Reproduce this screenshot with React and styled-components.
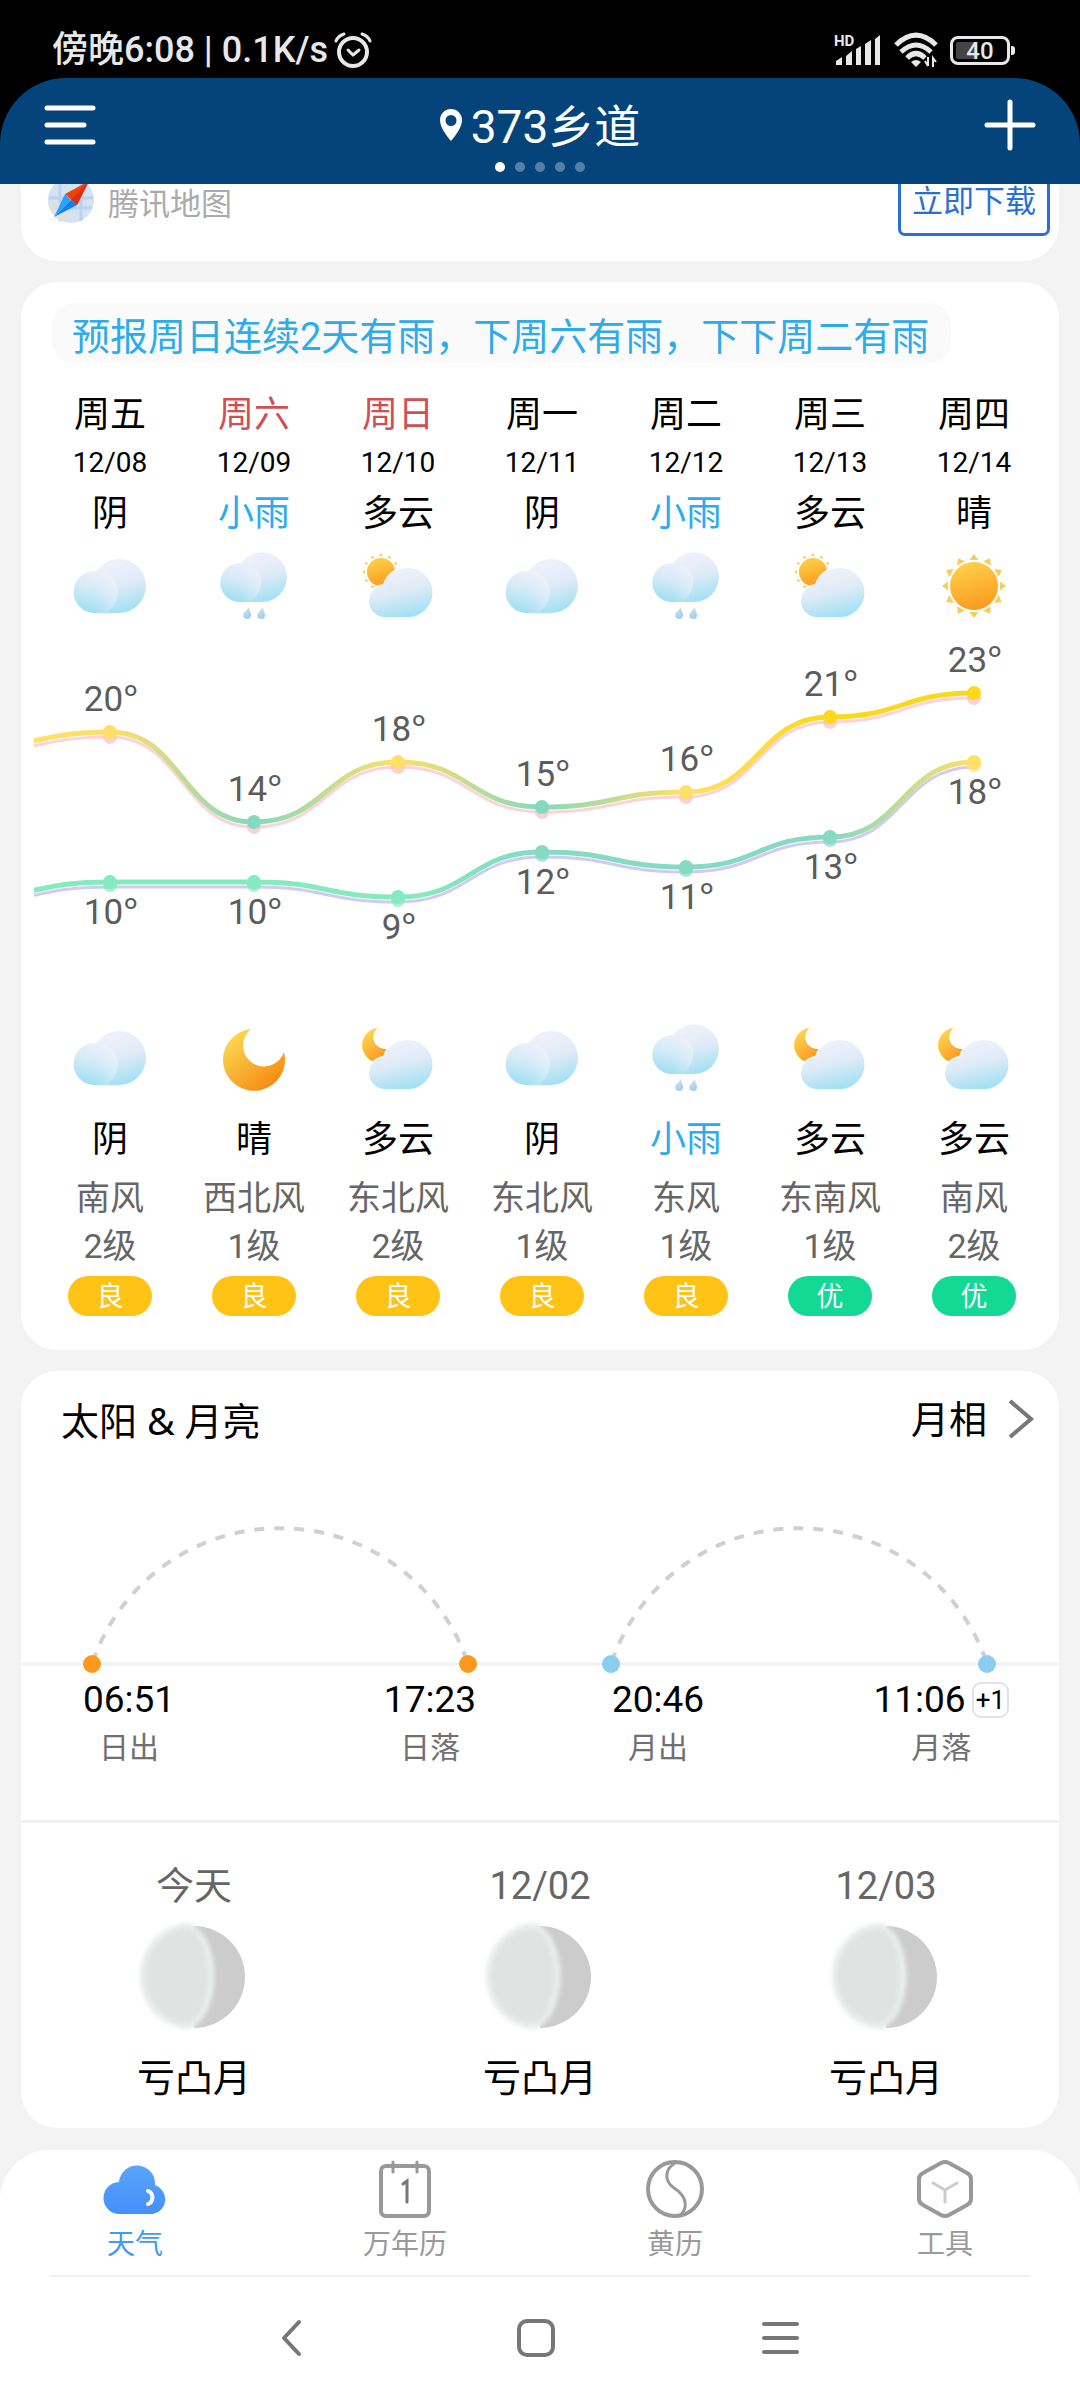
import styled, { createGlobalStyle } from "styled-components";

const DIAS = [
	{ dia: "周五", fecha: "12/08", tiempo: "阴", icono: "nube", noche: "阴", iconoNoche: "nube", viento: "南风", nivel: "2级", aire: "良" },
	{ dia: "周六", fecha: "12/09", tiempo: "小雨", icono: "lluvia", noche: "晴", iconoNoche: "luna", viento: "西北风", nivel: "1级", aire: "良", festivo: true },
	{ dia: "周日", fecha: "12/10", tiempo: "多云", icono: "solNube", noche: "多云", iconoNoche: "lunaNube", viento: "东北风", nivel: "2级", aire: "良", festivo: true },
	{ dia: "周一", fecha: "12/11", tiempo: "阴", icono: "nube", noche: "阴", iconoNoche: "nube", viento: "东北风", nivel: "1级", aire: "良" },
	{ dia: "周二", fecha: "12/12", tiempo: "小雨", icono: "lluvia", noche: "小雨", iconoNoche: "lluvia", viento: "东风", nivel: "1级", aire: "良" },
	{ dia: "周三", fecha: "12/13", tiempo: "多云", icono: "solNube", noche: "多云", iconoNoche: "lunaNube", viento: "东南风", nivel: "1级", aire: "优" },
	{ dia: "周四", fecha: "12/14", tiempo: "晴", icono: "sol", noche: "多云", iconoNoche: "lunaNube", viento: "南风", nivel: "2级", aire: "优" },
];

// the first point of each series is the day before, half hidden at the left edge
const MAXIMAS = [
	{ y: 126, color: "#ffe066" },
	{ t: 20, y: 110, color: "#ffdf66" },
	{ t: 14, y: 200, color: "#84dabf" },
	{ t: 18, y: 140, color: "#ffe066" },
	{ t: 15, y: 185, color: "#84dabf" },
	{ t: 16, y: 170, color: "#ffe066" },
	{ t: 21, y: 95, color: "#fbd81c" },
	{ t: 23, y: 71, color: "#fbd81c" },
];

const MINIMAS = [
	{ y: 275, color: "#85ebbf" },
	{ t: 10, y: 260, color: "#85ebbf" },
	{ t: 10, y: 260, color: "#85ebbf" },
	{ t: 9, y: 275, color: "#85ebbf" },
	{ t: 12, y: 230, color: "#86dac2" },
	{ t: 11, y: 245, color: "#86dac2" },
	{ t: 13, y: 215, color: "#86dac2" },
	{ t: 18, y: 140, color: "#ffe066" },
];

const FASES = ["今天", "12/02", "12/03"];

const posX = (i) => 76 + (i - 1) * 144;

const trazar = (serie) =>
	serie
		.map(({ y }, i) => {
			if (i === 0) return `M${posX(0)} ${y}`;
			const medio = posX(i) - 72;
			return `C${medio} ${serie[i - 1].y} ${medio} ${y} ${posX(i)} ${y}`;
		})
		.join("");

const Degradados = () => (
	<Ocultos aria-hidden="true">
		<defs>
			<linearGradient id="nubeFondo" x1="0.3" y1="0" x2="0.6" y2="1">
				<stop offset="0" stopColor="#f3f1fb" />
				<stop offset="0.5" stopColor="#dfebf7" />
				<stop offset="1" stopColor="#9fe0f3" />
			</linearGradient>
			<linearGradient id="nubeFrente" x1="0.6" y1="0" x2="0.35" y2="1">
				<stop offset="0" stopColor="#edf0fa" />
				<stop offset="0.45" stopColor="#d3ebf7" />
				<stop offset="1" stopColor="#9ddff2" />
			</linearGradient>
			<linearGradient id="nubeBrillo" x1="0" y1="0" x2="1" y2="0">
				<stop offset="0.5" stopColor="#f4f2fc" stopOpacity="0" />
				<stop offset="1" stopColor="#f4f2fc" stopOpacity="0.4" />
			</linearGradient>
			<linearGradient id="solFondo" x1="0.3" y1="0" x2="0.6" y2="1">
				<stop offset="0" stopColor="#ffd14a" />
				<stop offset="1" stopColor="#fa9a1e" />
			</linearGradient>
			<linearGradient id="lunaFondo" x1="0.1" y1="0.1" x2="0.8" y2="0.9">
				<stop offset="0" stopColor="#fdd952" />
				<stop offset="1" stopColor="#f68d15" />
			</linearGradient>
			<linearGradient id="gota" x1="0" y1="0" x2="0.6" y2="1">
				<stop offset="0" stopColor="#e4eaf6" />
				<stop offset="1" stopColor="#9dcdec" />
			</linearGradient>
			<linearGradient id="nubeAzul" x1="0" y1="0" x2="0" y2="1">
				<stop offset="0" stopColor="#58a5fb" />
				<stop offset="1" stopColor="#458ffb" />
			</linearGradient>
			<filter id="halo" x="-20%" y="-20%" width="140%" height="140%">
				<feGaussianBlur stdDeviation="2" />
			</filter>
		</defs>
	</Ocultos>
);

const Rayos = ({ cx, cy, r, largo, ancho }) =>
	Array.from({ length: 12 }, (_, i) => (
		<path
			key={i}
			d={`M${cx - ancho / 2} ${cy - r}L${cx} ${cy - r - largo}L${cx + ancho / 2} ${cy - r}Z`}
			transform={`rotate(${i * 30} ${cx} ${cy})`}
			fill="#f6cc5c"
		/>
	));

const FormaNube = () => (
	<>
		<path d="M49 9A27 27 0 0 1 49 63H24V36H22A27 27 0 0 1 49 9Z" fill="url(#nubeFondo)" />
		<path d="M25 21A21 21 0 0 0 24 63H34C43 60 48 50 48 40C47 28 37 21 25 21Z" fill="url(#nubeFrente)" />
		<path d="M25 21A21 21 0 0 0 24 63H34C43 60 48 50 48 40C47 28 37 21 25 21Z" fill="url(#nubeBrillo)" />
	</>
);

const NubeSimple = () => (
	<path
		d="M28 67A16 16 0 0 1 26 35C29 24 38 18 50 18A24 24 0 0 1 50 67Z"
		fill="url(#nubeFondo)"
		stroke="#fff"
		strokeWidth="2"
		paintOrder="stroke"
	/>
);

const Creciente = (props) => (
	<path d="M37 7A31 31 0 1 0 70 30A21 21 0 1 1 37 7Z" fill="url(#lunaFondo)" {...props} />
);

const ICONOS = {
	nube: <FormaNube />,
	lluvia: (
		<>
			<g transform="translate(3 -6) scale(.92)">
				<FormaNube />
			</g>
			<path d="M35 56C35 61 37 62 37 65A4 4 0 0 1 29 65C29 62 34 60 35 56Z" fill="url(#gota)" />
			<path d="M49 56C49 61 51 62 51 65A4 4 0 0 1 43 65C43 62 48 60 49 56Z" fill="url(#gota)" />
		</>
	),
	solNube: (
		<>
			<Rayos cx={23} cy={22} r={16} largo={3} ancho={4} />
			<circle cx="23" cy="22" r="14" fill="url(#solFondo)" />
			<NubeSimple />
		</>
	),
	sol: (
		<>
			<Rayos cx={40} cy={36} r={26} largo={6} ancho={9} />
			<circle cx="40" cy="36" r="24" fill="url(#solFondo)" />
		</>
	),
	luna: <Creciente />,
	lunaNube: (
		<>
			<Creciente transform="translate(-1 2) scale(.56)" />
			<NubeSimple />
		</>
	),
};

const IconoTiempo = ({ tipo }) => (
	<Icono viewBox="0 0 80 72" aria-hidden="true">
		{ICONOS[tipo]}
	</Icono>
);

const Linea = ({ id, serie, sombra, sombraPunto, desfase }) => {
	const d = trazar(serie);
	const ultimo = serie.length - 1;
	return (
		<>
			<linearGradient id={id} gradientUnits="userSpaceOnUse" x1={posX(0)} x2={posX(ultimo)} y1="0" y2="0">
				{serie.map(({ color }, i) => (
					<stop key={i} offset={i / ultimo} stopColor={color} />
				))}
			</linearGradient>
			<path d={d} transform="translate(0 5)" fill="none" stroke={sombra} strokeWidth="3" />
			{serie.slice(1).map(({ y, color }, i) => (
				<circle key={i} cx={posX(i + 1)} cy={y + (sombraPunto ? 5 : 3)} r="7" fill={sombraPunto || color} opacity="0.7" />
			))}
			<path d={d} fill="none" stroke={`url(#${id})`} strokeWidth="5" />
			{serie.slice(1).map(({ t, y, color }, i) => (
				<g key={i}>
					<circle cx={posX(i + 1)} cy={y} r="7" fill={color} />
					<Grados x={posX(i + 1) + 1} y={y + desfase}>
						{t}
						<tspan>°</tspan>
					</Grados>
				</g>
			))}
		</>
	);
};

const Arco = ({ color }) => (
	<Trayecto viewBox="0 0 519 192" aria-hidden="true">
		<path d="M0 180H519" stroke="#f1f1f1" strokeWidth="3" />
		<path
			d="M71 180A198 198 0 0 1 447 180"
			fill="none"
			stroke="#d0d0d0"
			strokeWidth="4"
			strokeDasharray="10 10"
			strokeDashoffset="-2"
		/>
		<circle cx="71" cy="180" r="9" fill={color} />
		<circle cx="447" cy="180" r="9" fill={color} />
	</Trayecto>
);

const Astro = ({ color, salida, puesta, nombre, extra, $relleno }) => (
	<div>
		<Arco color={color} />
		<Horas $relleno={$relleno}>
			<Hora>
				<time>{salida}</time>
				<span>{nombre}出</span>
			</Hora>
			<Hora>
				<div>
					<time>{puesta}</time>
					{extra && <Extra>{extra}</Extra>}
				</div>
				<span>{nombre}落</span>
			</Hora>
		</Horas>
	</div>
);

const App = () => {
	return (
		<Pantalla lang="zh-CN">
			<Global />
			<Degradados />
			<Superior>
				<Estado>
					<span>傍晚6:08 | 0.1K/s</span>
					<svg width="38" height="36" viewBox="0 0 38 36" fill="none" stroke="#e8e8e8" strokeLinecap="round">
						<circle cx="19" cy="20" r="14" strokeWidth="4" />
						<path d="M14 18l5 5 6-5" strokeWidth="3" strokeLinejoin="round" />
						<path d="M2 9Q4 4 10 2M36 9Q34 4 28 2" strokeWidth="3" />
					</svg>
					<Indicadores>
						<svg width="48" height="34" viewBox="0 0 48 34" fill="#e8e8e8">
							<TextoHd x="0" y="13">HD</TextoHd>
							<path d="M2 32V28L8 24V32ZM12 32V23L18 18V32ZM22 32V16L27 13V32ZM31 32V11L37 7V32ZM41 32V6L46 2V32Z" />
						</svg>
						<svg width="44" height="36" viewBox="0 0 44 36" fill="none" stroke="#e8e8e8" strokeWidth="5">
							<path d="M2 13Q22 -7 42 13" />
							<path d="M7 20Q22 6 37 20" />
							<path d="M13 26Q22 17 31 26" />
							<path d="M17 30Q22 26 27 30L22 35Z" fill="#e8e8e8" stroke="none" />
							<path d="M34 25V34M31 29L34 34M39 35V26L42 30" strokeWidth="2" />
						</svg>
						<Bateria>40</Bateria>
					</Indicadores>
				</Estado>
				<Cabecera>
					<BarraTitulo>
						<BotonIcono type="button" aria-label="菜单">
							<svg width="52" height="52" viewBox="0 0 52 52" stroke="#fff" strokeWidth="5" strokeLinecap="round">
								<path d="M3 9H49M3 26H40M3 43H49" />
							</svg>
						</BotonIcono>
						<Titulo>
							<svg width="22" height="32" viewBox="0 0 22 32" fill="#fff">
								<path
									fillRule="evenodd"
									d="M11 0A11 11 0 0 0 0 11C0 18 6 26 11 32C16 26 22 18 22 11A11 11 0 0 0 11 0ZM11 6A5 5 0 1 1 11 17A5 5 0 1 1 11 6Z"
								/>
							</svg>
							<span>373乡道</span>
						</Titulo>
						<BotonIcono type="button" aria-label="添加">
							<svg width="52" height="52" viewBox="0 0 52 52" stroke="#fff" strokeWidth="5" strokeLinecap="round">
								<path d="M3 26H49M26 3V49" />
							</svg>
						</BotonIcono>
					</BarraTitulo>
					<Puntos>
						<Punto $activo />
						<Punto />
						<Punto />
						<Punto />
						<Punto />
					</Puntos>
				</Cabecera>
			</Superior>

			<Contenido>
				<Anuncio>
					<svg width="48" height="48" viewBox="0 0 48 48" aria-hidden="true">
						<circle cx="24" cy="22" r="23" fill="#d3e3f3" />
						<path d="M2 20H46M3 30H45M13 2V43M34 2V43" stroke="#b9d2ee" strokeWidth="3" />
						<path d="M1 25H20V45Q4 40 1 25Z" fill="#dfe0e4" />
						<path d="M42 3L18 16L30 27Z" fill="#f2410d" />
						<path d="M42 3L24 22L30 27Z" fill="#d93010" />
						<path d="M18 16L7 39L24 22Z" fill="#27a4ff" />
						<path d="M7 39L30 27L24 22Z" fill="#0b82f0" />
					</svg>
					<Anunciante>腾讯地图</Anunciante>
					<Descargar type="button">立即下载</Descargar>
				</Anuncio>

				<Prevision>
					<Aviso>预报周日连续2天有雨，下周六有雨，下下周二有雨</Aviso>
					<Semana>
						{DIAS.map((d) => (
							<Dia key={d.fecha}>
								<Texto $color={d.festivo && "#cf4f55"}>{d.dia}</Texto>
								<Fecha>{d.fecha}</Fecha>
								<Texto $color={d.tiempo === "小雨" && "#2eabea"}>{d.tiempo}</Texto>
								<IconoTiempo tipo={d.icono} />
							</Dia>
						))}
					</Semana>
					<Grafica viewBox="0 0 1012 400" role="img" aria-label="气温">
						<Linea id="lineaMax" serie={MAXIMAS} sombra="#fbd3d9" sombraPunto="#f9bfc0" desfase={-21} />
						<Linea id="lineaMin" serie={MINIMAS} sombra="#cfccf4" desfase={42} />
					</Grafica>
					<Semana>
						{DIAS.map((d) => (
							<Dia key={d.fecha}>
								<IconoTiempo tipo={d.iconoNoche} />
								<Texto $color={d.noche === "小雨" && "#2eabea"}>{d.noche}</Texto>
								<Viento>
									{d.viento}
									<br />
									{d.nivel}
								</Viento>
								<Aire $bueno={d.aire === "优"}>{d.aire}</Aire>
							</Dia>
						))}
					</Semana>
				</Prevision>

				<SolLuna>
					<Encabezado>
						<h2>太阳 & 月亮</h2>
						<a href="#fases">
							月相
							<svg width="28" height="42" viewBox="0 0 28 42" fill="none" stroke="#777" strokeWidth="4">
								<path d="M3 2L24 20L3 38" />
							</svg>
						</a>
					</Encabezado>
					<Astros>
						<Astro color="#ff9a1f" salida="06:51" puesta="17:23" nombre="日" $relleno="0 64px 0 62px" />
						<Astro color="#8bccf3" salida="20:46" puesta="11:06" nombre="月" extra="+1" $relleno="0 50px 0 72px" />
					</Astros>
					<Fases id="fases">
						{FASES.map((f) => (
							<Fase key={f}>
								<span>{f}</span>
								<svg width="116" height="112" viewBox="0 0 116 112" aria-hidden="true">
									<path d="M58 6A51 51 0 0 1 58 108Z" fill="#ccc" />
									<path d="M54 3A50 53 0 0 0 54 109C87 93 87 19 54 3Z" fill="#e9edec" filter="url(#halo)" />
									<path d="M54 9A45 47 0 0 0 54 103C78 86 78 24 54 9Z" fill="#dfe4e3" filter="url(#halo)" />
								</svg>
								<strong>亏凸月</strong>
							</Fase>
						))}
					</Fases>
				</SolLuna>
			</Contenido>

			<Inferior>
				<Pestanas>
					<Pestana href="#tianqi" $activa>
						<svg viewBox="0 0 64 60">
							<path
								d="M17 55A16 16 0 0 1 16 23A18 18 0 0 1 52 26A15 15 0 0 1 50 55Z"
								fill="url(#nubeAzul)"
							/>
							<path d="M45 32A7 7 0 0 1 45 45" stroke="#fff" strokeWidth="4" strokeLinecap="round" fill="none" />
						</svg>
						天气
					</Pestana>
					<Pestana href="#wannianli">
						<svg viewBox="0 0 64 60" fill="none" stroke="#999" strokeWidth="4" strokeLinecap="round">
							<rect x="8" y="7" width="48" height="50" rx="5" />
							<path d="M20 3V13M44 3V13" strokeWidth="3" />
							<path d="M30 25L34 22V43" strokeWidth="3" stroke="#777" />
						</svg>
						万年历
					</Pestana>
					<Pestana href="#huangli">
						<svg viewBox="0 0 64 60" fill="none" stroke="#999" strokeWidth="3">
							<circle cx="32" cy="30" r="27" strokeWidth="4" />
							<path d="M34 3C22 9 20 21 31 29C44 37 46 50 36 57" />
						</svg>
						黄历
					</Pestana>
					<Pestana href="#gongju">
						<svg viewBox="0 0 64 60" fill="none" stroke="#999" strokeLinejoin="round" strokeLinecap="round">
							<path d="M28 4Q32 2 36 4L54 14Q58 16 58 20V40Q58 44 54 46L36 56Q32 58 28 56L10 46Q6 44 6 40V20Q6 16 10 14Z" strokeWidth="4" />
							<path d="M20 24L32 31L44 24M32 31V43" stroke="#ccc" strokeWidth="3" />
						</svg>
						工具
					</Pestana>
				</Pestanas>
				<Navegacion>
					<button type="button" aria-label="返回">
						<svg width="40" height="40" viewBox="0 0 40 40">
							<path d="M27 4L12 20L27 36" />
						</svg>
					</button>
					<button type="button" aria-label="主页">
						<svg width="40" height="40" viewBox="0 0 40 40">
							<rect x="3" y="3" width="34" height="34" rx="8" />
						</svg>
					</button>
					<button type="button" aria-label="最近">
						<svg width="40" height="40" viewBox="0 0 40 40">
							<path d="M4 6H37M4 20H37M4 34H37" />
						</svg>
					</button>
				</Navegacion>
			</Inferior>
		</Pantalla>
	);
};

const Global = createGlobalStyle`
	* {
		box-sizing: border-box;
	}

	body {
		margin: 0;
		background: #f3f3f3;
		font-family: Roboto, "Noto Sans CJK SC", sans-serif;
		font-size: 36px;
		line-height: 48px;
		color: #000;
	}

	svg {
		display: block;
	}

	button {
		padding: 0;
		border: 0;
		background: none;
		font: inherit;
		cursor: pointer;
	}

	a {
		color: inherit;
		text-decoration: none;
	}
`;

const Ocultos = styled.svg`
	position: absolute;
	width: 0;
	height: 0;
`;

const Pantalla = styled.div`
	display: flex;
	flex-direction: column;
	min-height: 100vh;
`;

const Superior = styled.header`
	position: relative;
	z-index: 1;
	background: #000;
`;

const Estado = styled.div`
	display: flex;
	align-items: center;
	gap: 6px;
	height: 78px;
	padding: 22px 70px 0 52px;
	font-weight: 500;
	color: #e8e8e8;
`;

const Indicadores = styled.div`
	display: flex;
	align-items: center;
	gap: 12px;
	margin-left: auto;
`;

const TextoHd = styled.text`
	font-size: 15px;
	font-weight: 700;
`;

const Bateria = styled.span`
	position: relative;
	width: 60px;
	height: 29px;
	border: 3px solid #e8e8e8;
	border-radius: 8px;
	background: linear-gradient(90deg, #444 40%, transparent 40%) content-box;
	padding: 3px;
	font-size: 24px;
	line-height: 18px;
	text-align: center;

	&::after {
		content: "";
		position: absolute;
		top: 7px;
		right: -8px;
		width: 4px;
		height: 9px;
		border-radius: 0 3px 3px 0;
		background: #e8e8e8;
	}
`;

const Cabecera = styled.div`
	padding: 14px 44px 12px;
	border-radius: 66px 66px 0 0;
	background: #05447a;
	color: #fff;
`;

const BarraTitulo = styled.div`
	display: flex;
	align-items: center;
	justify-content: space-between;
	height: 66px;
`;

const BotonIcono = styled.button`
	width: 52px;
	height: 52px;
`;

const Titulo = styled.h1`
	display: flex;
	align-items: center;
	gap: 9px;
	margin: 0;
	font-size: 46px;
	font-weight: 400;

	span {
		padding-top: 4px;
	}
`;

const Puntos = styled.div`
	display: flex;
	justify-content: center;
	gap: 10px;
	margin-top: 4px;
`;

const Punto = styled.span`
	width: 10px;
	height: 10px;
	border-radius: 50%;
	background: ${({ $activo }) => ($activo ? "#fff" : "#5580a6")};
`;

const Contenido = styled.main`
	display: flex;
	flex-direction: column;
	gap: 21px;
	margin: -16px 21px 22px;
`;

const Tarjeta = styled.section`
	border-radius: 36px;
	background: #fff;
`;

const Anuncio = styled(Tarjeta)`
	display: flex;
	align-items: center;
	gap: 13px;
	padding: 0 9px 25px 26px;
	border-radius: 0 0 36px 36px;
	font-size: 31px;
	color: #aaa;
`;

const Anunciante = styled.span`
	padding-top: 6px;
`;

const Descargar = styled.button`
	width: 152px;
	height: 68px;
	margin-left: auto;
	border: 3px solid #2a6fd3;
	border-radius: 7px;
	color: #2a6fd3;
`;

const Prevision = styled(Tarjeta)`
	padding: 21px 13px 34px;
`;

const Aviso = styled.p`
	width: fit-content;
	margin: 0 0 25px 18px;
	padding: 10px 22px 2px 20px;
	border-radius: 22px;
	background: #fafafa;
	font-size: 38px;
	color: #2eabea;
`;

const Semana = styled.div`
	display: grid;
	grid-template-columns: repeat(7, 1fr);
	padding-left: 4px;
`;

const Dia = styled.div`
	display: flex;
	flex-direction: column;
	align-items: center;
`;

const Texto = styled.span`
	padding-top: 3px;
	color: ${({ $color }) => $color || "#000"};
`;

const Fecha = styled.time`
	font-size: 28px;
`;

const Icono = styled.svg`
	width: 80px;
	height: 72px;
	margin: 12px 0 0;

	${Dia} > &:first-child {
		margin: 0 0 19px;
	}
`;

const Grafica = styled.svg`
	width: 100%;
	height: auto;
`;

const Grados = styled.text`
	font-size: 35px;
	fill: #5c5c5c;
	text-anchor: middle;

	tspan {
		font-family: "Noto Sans", sans-serif;
	}
`;

const Viento = styled.span`
	margin: 10px 0 6px;
	font-size: 34px;
	text-align: center;
	color: #666;
`;

const Aire = styled.span`
	width: 84px;
	padding-top: 2px;
	border-radius: 20px;
	background: ${({ $bueno }) => ($bueno ? "#13d995" : "#ffc316")};
	font-size: 27px;
	line-height: 38px;
	text-align: center;
	color: #fff;
`;

const SolLuna = styled(Tarjeta)`
	padding-bottom: 26px;
`;

const Encabezado = styled.div`
	display: flex;
	align-items: center;
	justify-content: space-between;
	padding: 25px 24px 0 40px;
	font-size: 38px;

	h2 {
		margin: 0;
		font-family: "Noto Sans", "Noto Sans CJK SC", sans-serif;
		font-size: inherit;
		font-weight: 400;
	}

	a {
		display: flex;
		align-items: center;
		gap: 20px;
	}
`;

const Astros = styled.div`
	display: grid;
	grid-template-columns: 1fr 1fr;
	padding: 40px 0 48px;
	border-bottom: 3px solid #f1f1f1;
`;

const Trayecto = styled.svg`
	width: 100%;
	height: auto;
`;

const Horas = styled.div`
	display: flex;
	justify-content: space-between;
	padding: ${({ $relleno }) => $relleno};
`;

const Hora = styled.div`
	display: flex;
	flex-direction: column;
	align-items: center;
	font-size: 37px;

	div {
		display: flex;
		align-items: center;
		gap: 6px;
	}

	span {
		font-size: 30px;
		color: #707070;
	}

	div span {
		font-size: 26px;
		color: #000;
	}
`;

const Extra = styled.span`
	padding: 0 2px;
	border: 2px solid #e2e2e2;
	border-radius: 9px;
	line-height: 32px;
`;

const Fases = styled.div`
	display: grid;
	grid-template-columns: repeat(3, 1fr);
	padding-top: 39px;
`;

const Fase = styled.div`
	display: flex;
	flex-direction: column;
	align-items: center;
	font-size: 38px;
	color: #666;

	svg {
		margin: 10px 0 22px;
	}

	strong {
		font-weight: 400;
		color: #000;
	}
`;

const Inferior = styled.footer`
	flex: 1;
	border-radius: 50px 50px 0 0;
	background: #fff;
`;

const Pestanas = styled.nav`
	display: grid;
	grid-template-columns: repeat(4, 1fr);
	padding: 9px 0 8px;
	background: linear-gradient(#f1f1f1, #f1f1f1) center bottom / calc(100% - 100px) 2px no-repeat;
`;

const Pestana = styled.a`
	display: flex;
	flex-direction: column;
	align-items: center;
	gap: 2px;
	font-size: 28px;
	color: ${({ $activa }) => ($activa ? "#3e9bf6" : "#999")};

	svg {
		width: 64px;
		height: 60px;
	}
`;

const Navegacion = styled.nav`
	display: flex;
	justify-content: center;
	padding: 41px 8px 40px 0;

	button {
		display: flex;
		justify-content: center;
		width: 244px;
	}

	svg {
		fill: none;
		stroke: #777;
		stroke-width: 4px;
		stroke-linecap: round;
		stroke-linejoin: round;
	}
`;

export default App;
